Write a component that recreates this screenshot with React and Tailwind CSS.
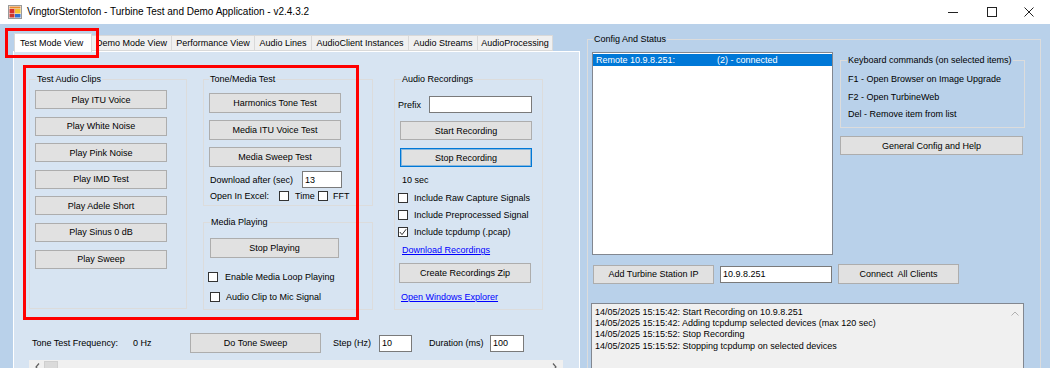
import React from "react";

const Btn = ({ children, className = "" }) => (
  <button
    type="button"
    className={"flex items-center justify-center shrink-0 bg-[#e1e1e1] border border-[#adadad] " + className}
  >
    {children}
  </button>
);

const Box = ({ checked = false }) => (
  <span className="flex items-center justify-center w-[10px] h-[10px] shrink-0 bg-white border border-[#333333]">
    {checked && (
      <svg width="8" height="8" viewBox="0 0 8 8">
        <polyline points="0.8,4 3,6.6 7.2,1.2" fill="none" stroke="#333333" strokeWidth="1" />
      </svg>
    )}
  </span>
);

const Field = ({ value, className = "" }) => (
  <input
    readOnly
    value={value}
    className={"h-[17px] shrink-0 bg-white border border-[#7a7a7a] px-[2px] outline-none " + className}
  />
);

const Group = ({ label, className = "", legendClass = "", children }) => (
  <fieldset className={"border border-[#dcdcdc] shrink-0 " + className}>
    <legend className={"px-[1px] leading-[12px] " + legendClass}>{label}</legend>
    {children}
  </fieldset>
);

const AppIcon = () => (
  <svg width="14" height="14" viewBox="0 0 14 14" className="ml-[8px]">
    <rect x="0.5" y="0.5" width="13" height="13" fill="#f4f4f4" stroke="#9a9a9a" />
    <rect x="1.5" y="1.5" width="11" height="2" fill="#e8892b" />
    <rect x="1.5" y="4" width="5" height="4.5" fill="#d9302a" />
    <rect x="7" y="4" width="5.5" height="4.5" fill="#f2c130" />
    <rect x="1.5" y="9" width="5" height="3.5" fill="#c9352c" />
    <rect x="7" y="9" width="5.5" height="3.5" fill="#2f6fd1" />
  </svg>
);

const clips = [
  "Play ITU Voice",
  "Play White Noise",
  "Play Pink Noise",
  "Play IMD Test",
  "Play Adele Short",
  "Play Sinus 0 dB",
  "Play Sweep",
];

const tabs = [
  ["Demo Mode View", "w-[80px]"],
  ["Performance View", "w-[83px]"],
  ["Audio Lines", "w-[57px]"],
  ["AudioClient Instances", "w-[97px]"],
  ["Audio Streams", "w-[69px]"],
  ["AudioProcessing", "w-[75px]"],
];

const logLines = [
  "14/05/2025 15:15:42: Start Recording on 10.9.8.251",
  "14/05/2025 15:15:42: Adding tcpdump selected devices (max 120 sec)",
  "14/05/2025 15:15:52: Stop Recording",
  "14/05/2025 15:15:52: Stopping tcpdump on selected devices",
];

export default function App() {
  return (
    <div className="relative w-[1050px] h-[368px] overflow-hidden bg-[#b9d1ea] font-['Liberation_Sans',Arial,sans-serif] text-[9px] leading-[12px] text-black">
      {/* title bar */}
      <div className="h-[24px] bg-white flex items-center">
        <AppIcon />
        <span className="ml-[5px] text-[10px]">VingtorStentofon - Turbine Test and Demo Application - v2.4.3.2</span>
        <div className="ml-auto mr-[16px] flex items-center">
          <svg width="10" height="10" viewBox="0 0 10 10">
            <line x1="0" y1="5.5" x2="10" y2="5.5" stroke="#222" strokeWidth="1" />
          </svg>
          <svg width="10" height="10" viewBox="0 0 10 10" className="ml-[29px]">
            <rect x="0.5" y="0.5" width="9" height="9" fill="none" stroke="#222" strokeWidth="1" />
          </svg>
          <svg width="10" height="10" viewBox="0 0 10 10" className="ml-[27px]">
            <path d="M0.5 0.5 L9.5 9.5 M9.5 0.5 L0.5 9.5" stroke="#222" strokeWidth="1" />
          </svg>
        </div>
      </div>

      <div className="flex">
        {/* left: tab control */}
        <div className="ml-[13px] w-[567px] pt-[9px] shrink-0">
          <div className="flex items-end h-[18px] pl-[1px]">
            <div className="relative z-10 -mb-px h-[19px] w-[78px] bg-white border border-b-0 border-[#d9d9d9] flex items-center pl-[5px]">
              Test Mode View
            </div>
            {tabs.map(([t, w]) => (
              <div
                key={t}
                className={"h-[16px] bg-[#f0f0f0] border border-l-0 border-[#d9d9d9] flex items-center justify-center " + w}
              >
                {t}
              </div>
            ))}
          </div>

          <div className="h-[330px] bg-[#d7e4f2] border border-white pl-[15px] pt-[21px]">
            <div className="w-[534px]">
              <div className="flex items-start h-[237px]">
                <Group label="Test Audio Clips" className="w-[158px] h-[236px]" legendClass="ml-[6px]">
                  <div className="pl-[5px] pt-[5px] flex flex-col gap-[7.6px]">
                    {clips.map((c) => (
                      <Btn key={c} className="w-[132px] h-[19px]">
                        {c}
                      </Btn>
                    ))}
                  </div>
                </Group>

                <div className="ml-[16px] flex flex-col">
                  <Group label="Tone/Media Test" className="w-[170px] h-[133px]" legendClass="ml-[5px]">
                    <div className="pl-[5px] pt-[8px] flex flex-col">
                      <Btn className="w-[132px] h-[20px]">Harmonics Tone Test</Btn>
                      <Btn className="mt-[7px] w-[132px] h-[20px]">Media ITU Voice Test</Btn>
                      <Btn className="mt-[7px] w-[132px] h-[20px]">Media Sweep Test</Btn>
                      <div className="mt-[4px] h-[17px] flex items-center">
                        <span className="ml-[1px] w-[92px]">Download after (sec)</span>
                        <Field value="13" className="w-[40px]" />
                      </div>
                      <div className="mt-[2px] h-[12px] flex items-center">
                        <span className="ml-[1px] w-[69px]">Open In Excel:</span>
                        <Box />
                        <span className="ml-[6px] w-[23px]">Time</span>
                        <Box />
                        <span className="ml-[5px]">FFT</span>
                      </div>
                    </div>
                  </Group>

                  <Group label="Media Playing" className="mt-[10px] w-[170px] h-[94px]" legendClass="ml-[6px]">
                    <div className="pl-[6px] pt-[10px] flex flex-col">
                      <Btn className="w-[129px] h-[20px]">Stop Playing</Btn>
                      <div className="mt-[14px] -ml-[2px] h-[10px] flex items-center">
                        <Box />
                        <span className="ml-[7px]">Enable Media Loop Playing</span>
                      </div>
                      <div className="mt-[10px] h-[10px] flex items-center">
                        <Box />
                        <span className="ml-[6px]">Audio Clip to Mic Signal</span>
                      </div>
                    </div>
                  </Group>
                </div>

                <Group label="Audio Recordings" className="ml-[21px] w-[149px] h-[237px]" legendClass="ml-[6px]">
                  <div className="flex flex-col">
                    <div className="mt-[11px] h-[17px] flex items-center">
                      <span className="ml-[3px] w-[31px]">Prefix</span>
                      <Field value="" className="w-[103px]" />
                    </div>
                    <Btn className="mt-[8px] ml-[5px] w-[132px] h-[19px]">Start Recording</Btn>
                    <Btn className="mt-[8px] ml-[5px] w-[132px] h-[19px] !border-[#0078d7] shadow-[inset_0_0_0_1px_rgba(0,120,215,0.4)]">
                      Stop Recording
                    </Btn>
                    <div className="mt-[7px] ml-[7px] h-[12px]">10 sec</div>
                    <div className="mt-[7px] ml-[3px] h-[10px] flex items-center">
                      <Box />
                      <span className="ml-[6px]">Include Raw Capture Signals</span>
                    </div>
                    <div className="mt-[7px] ml-[3px] h-[10px] flex items-center">
                      <Box />
                      <span className="ml-[6px]">Include Preprocessed Signal</span>
                    </div>
                    <div className="mt-[7px] ml-[3px] h-[10px] flex items-center">
                      <Box checked />
                      <span className="ml-[6px]">Include tcpdump (.pcap)</span>
                    </div>
                    <div className="mt-[7px] ml-[7px] h-[12px] text-[#0000ff] underline">Download Recordings</div>
                    <Btn className="mt-[7px] ml-[4px] w-[132px] h-[20px]">Create Recordings Zip</Btn>
                    <div className="mt-[8px] ml-[6px] h-[12px] text-[#0000ff] underline">Open Windows Explorer</div>
                  </div>
                </Group>
              </div>

              <div className="mt-[23px] h-[20px] flex items-center">
                <span className="ml-[3px] w-[101px]">Tone Test Frequency:</span>
                <span className="w-[57px]">0 Hz</span>
                <Btn className="w-[131px] h-[20px]">Do Tone Sweep</Btn>
                <span className="ml-[12px] w-[46px]">Step (Hz)</span>
                <Field value="10" className="w-[33px]" />
                <span className="ml-[17px] w-[61px]">Duration (ms)</span>
                <Field value="100" className="w-[34px]" />
              </div>

              <div className="mt-[7px] h-[14px] bg-[#f0f0f0] flex items-center">
                <svg width="5" height="8" viewBox="0 0 5 8" className="ml-[6px]">
                  <polyline points="4,0.5 1,4 4,7.5" fill="none" stroke="#606060" strokeWidth="1.2" />
                </svg>
                <div className="ml-[4px] w-[14px] h-[12px] bg-[#dadada] border border-[#cfcfcf]" />
                <svg width="5" height="8" viewBox="0 0 5 8" className="ml-auto mr-[6px]">
                  <polyline points="1,0.5 4,4 1,7.5" fill="none" stroke="#606060" strokeWidth="1.2" />
                </svg>
              </div>
            </div>
          </div>
        </div>

        {/* right: config and status */}
        <div className="pt-[9px]">
          <fieldset className="ml-[7px] w-[454px] h-[345px] border border-[#dcdcdc]">
            <legend className="ml-[5px] px-[1px] leading-[12px]">Config And Status</legend>
            <div className="pl-[4px] pt-[7px]">
              <div className="flex items-start">
                <div className="w-[241px] h-[203px] shrink-0 bg-white border border-[#828790] pt-[1px]">
                  <div className="h-[12px] bg-[#0078d7] text-white flex items-center">
                    <span className="pl-[3px] w-[124px]">Remote 10.9.8.251:</span>
                    <span>(2) - connected</span>
                  </div>
                </div>
                <div className="ml-[7px] flex flex-col">
                  <Group
                    label="Keyboard commands (on selected items)"
                    className="mt-[2px] w-[185px] h-[74px]"
                    legendClass="ml-[6px]"
                  >
                    <div className="pl-[7px] pt-[5px] leading-[17.5px]">
                      <div>F1 - Open Browser on Image Upgrade</div>
                      <div>F2 - Open TurbineWeb</div>
                      <div>Del - Remove item from list</div>
                    </div>
                  </Group>
                  <Btn className="mt-[8px] w-[183px] h-[19px]">General Config and Help</Btn>
                </div>
              </div>

              <div className="mt-[9px] h-[20px] flex items-center">
                <Btn className="ml-[1px] w-[121px] h-[19px]">Add Turbine Station IP</Btn>
                <Field value="10.9.8.251" className="ml-[6px] w-[112px]" />
                <Btn className="ml-[6px] w-[121px] h-[20px]">Connect&nbsp; All Clients</Btn>
              </div>

              <div className="mt-[19px] -ml-[1px] w-[433px] h-[100px] bg-[#f0f0f0] border border-[#828790] flex">
                <div className="flex-1 pl-[3px] pt-[3px] leading-[11.2px] whitespace-nowrap">
                  {logLines.map((l) => (
                    <div key={l}>{l}</div>
                  ))}
                </div>
                <div className="w-[17px] flex justify-center pt-[7px]">
                  <svg width="8" height="5" viewBox="0 0 8 5">
                    <polyline points="0.5,4.5 4,1 7.5,4.5" fill="none" stroke="#b0b0b0" strokeWidth="1" />
                  </svg>
                </div>
              </div>
            </div>
          </fieldset>
        </div>
      </div>

      {/* red annotation boxes */}
      <div className="absolute z-20 left-[5px] top-[28px] w-[94px] h-[30px] border-[3px] border-[#ff0000] pointer-events-none" />
      <div className="absolute z-20 left-[23px] top-[65px] w-[336px] h-[255px] border-[3px] border-[#ff0000] pointer-events-none" />
    </div>
  );
}
